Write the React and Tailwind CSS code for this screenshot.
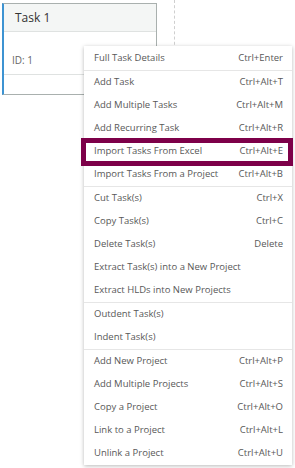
const groups = [
  [["Full Task Details", "Ctrl+Enter"]],
  [
    ["Add Task", "Ctrl+Alt+T"],
    ["Add Multiple Tasks", "Ctrl+Alt+M"],
    ["Add Recurring Task", "Ctrl+Alt+R"],
    ["Import Tasks From Excel", "Ctrl+Alt+E", true],
    ["Import Tasks From a Project", "Ctrl+Alt+B"],
  ],
  [
    ["Cut Task(s)", "Ctrl+X"],
    ["Copy Task(s)", "Ctrl+C"],
    ["Delete Task(s)", "Delete"],
    ["Extract Task(s) into a New Project", ""],
    ["Extract HLDs into New Projects", ""],
  ],
  [
    ["Outdent Task(s)", ""],
    ["Indent Task(s)", ""],
  ],
  [
    ["Add New Project", "Ctrl+Alt+P"],
    ["Add Multiple Projects", "Ctrl+Alt+S"],
    ["Copy a Project", "Ctrl+Alt+O"],
    ["Link to a Project", "Ctrl+Alt+L"],
    ["Unlink a Project", "Ctrl+Alt+U"],
  ],
];

function MenuItem({ label, shortcut, marked }) {
  return (
    <div className="relative flex h-[23px] items-center justify-between pl-[10px] pr-[9px]">
      <span>{label}</span>
      <span>{shortcut}</span>
      {marked ? (
        <div className="pointer-events-none absolute -top-[2px] -bottom-[3px] -left-[3px] -right-px border-[5px] border-[#7d0049]" />
      ) : null}
    </div>
  );
}

export default function App() {
  return (
    <div className="relative h-[468px] w-[295px] overflow-hidden bg-white font-['Open_Sans',sans-serif]">
      <div className="absolute left-[174px] top-0 h-[50px] border-l border-dashed border-[#cfcfcf]" />

      <div className="ml-[2px] mt-[3px] w-[155px] border border-l-2 border-[#a9b0ae] border-l-[#3d93d2]">
        <div className="flex h-[28px] items-center border-b border-[#dfe2e1] bg-[#f4f6f5] pl-[11px] text-[12px] text-[#333]">
          Task 1
        </div>
        <div className="flex h-[43px] items-end border-b border-[#dfe2e1] pb-[6px] pl-[8px] text-[10px] text-[#666]">
          ID: 1
        </div>
        <div className="h-[19px]" />
      </div>

      <div className="absolute left-[84px] top-[46px] w-[208px] bg-white text-[9.5px] text-[#585858] shadow-[0_1px_4px_rgba(0,0,0,0.28)]">
        <div className="h-px" />
        {groups.map((items, i) => (
          <div key={i} className={i > 0 ? "border-t border-[#e6e6e6]" : ""}>
            {items.map(([label, shortcut, marked]) => (
              <MenuItem key={label} label={label} shortcut={shortcut} marked={marked} />
            ))}
          </div>
        ))}
      </div>
    </div>
  );
}
